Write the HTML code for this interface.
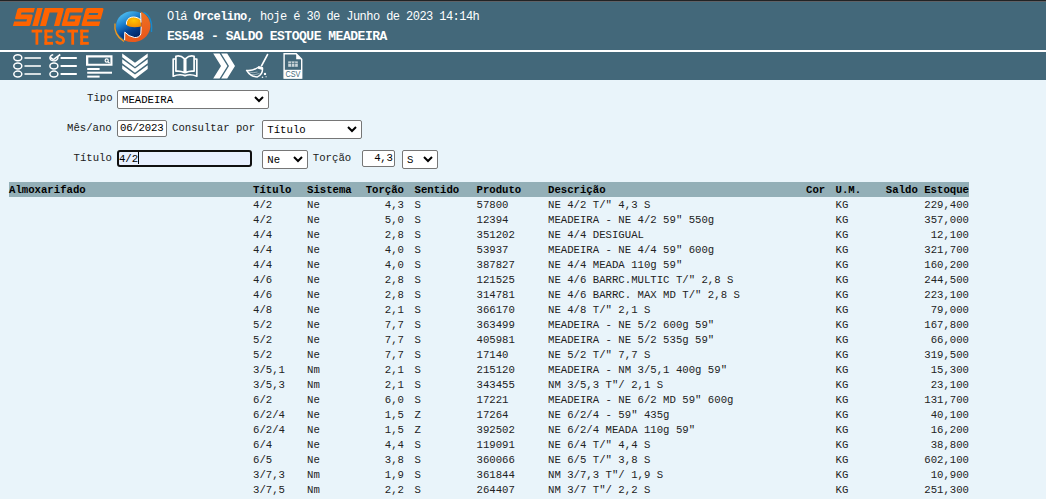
<!DOCTYPE html>
<html><head><meta charset="utf-8">
<style>
html,body{margin:0;padding:0;}
body{width:1046px;height:499px;overflow:hidden;background:#e9f4fa;position:relative;font-family:"Liberation Mono",monospace;}
#top{position:absolute;left:0;top:0;width:1046px;height:50px;background:#43687a;}
#top .l0{position:absolute;left:0;top:0;width:1046px;height:1px;background:#222325;}
#top .l1{position:absolute;left:0;top:1px;width:1046px;height:1px;background:#5f6166;}
#top .l2{position:absolute;left:0;top:2px;width:1046px;height:1px;background:#3f6a7c;}
#wline{position:absolute;left:0;top:50px;width:1046px;height:2px;background:#ffffff;}
#tb{position:absolute;left:0;top:52px;width:1046px;height:28px;background:#43687a;}
.ht{position:absolute;left:167px;color:#fff;white-space:pre;font-family:"Liberation Mono",monospace;}
.h1{top:10px;font-size:12px;letter-spacing:-0.56px;line-height:15px;}
.h2{top:29px;font-size:13px;letter-spacing:-0.47px;line-height:15px;font-weight:bold;}
svg{position:absolute;overflow:visible;}
.lbl{position:absolute;font-size:10.667px;line-height:15px;color:#202020;white-space:pre;}
.sel{position:absolute;box-sizing:border-box;background:#fff;border:1px solid #767676;border-radius:2px;}
.sel span{position:absolute;font-size:10.667px;line-height:15px;white-space:pre;color:#000;}
.inp{position:absolute;box-sizing:border-box;background:#fff;border:1px solid #767676;border-radius:2px;}
.inp span{position:absolute;font-size:10.667px;line-height:15px;white-space:pre;color:#000;}
.th{position:absolute;left:0;width:1046px;height:15px;}
.thbg{position:absolute;left:9px;width:960px;height:15px;background:#93afb7;}
.th .c{font-weight:bold;}
.tr{position:absolute;left:0;width:1046px;height:15px;}
.th .c,.tr .c{position:absolute;top:1px;font-size:10.667px;line-height:15px;white-space:pre;color:#000;}
.tr .c{color:#222;}
</style></head><body>
<div id="top"><div class="l0"></div><div class="l1"></div><div class="l2"></div></div>
<div id="wline"></div>
<div id="tb"></div>

<!-- SINGE logo -->
<svg style="left:0;top:0" width="160" height="50" viewBox="0 0 160 50">
  <g fill="#ff6300" transform="translate(0,26) skewX(-15.1) translate(0,-26)">
    <path d="M14.4,8 H30 V12.6 H17.9 V14.6 H28.5 Q30,14.6 30,16.1 V24.5 Q30,26 28.5,26 H12.9 V21.4 H25.2 V19.2 H14.4 Q12.9,19.2 12.9,17.7 V9.5 Q12.9,8 14.4,8 Z"/>
    <path d="M32.3,8 H37.9 V26 H32.3 Z"/>
    <path d="M40,8 H57.8 Q59.3,8 59.3,9.5 V26 H54 V12.6 H46 V26 H40 Z"/>
    <path d="M62.9,8 H78.6 V12.6 H66 V21.4 H73.5 V19.3 H67.8 V15.4 H78.6 V24.5 Q78.6,26 77.1,26 H62.9 Q61.4,26 61.4,24.5 V9.5 Q61.4,8 62.9,8 Z"/>
    <path d="M82.7,8 H97.5 Q99,8 99,9.5 V19.3 H85.6 V21.4 H99 V26 H82.7 Q81.2,26 81.2,24.5 V9.5 Q81.2,8 82.7,8 Z M85.6,12.9 V15 H94.7 V12.9 Z" fill-rule="evenodd"/>
  </g>
  <g fill="#ff6300">
    <rect x="31.6" y="29.7" width="10.6" height="2.8"/>
    <rect x="35.5" y="29.7" width="2.8" height="15"/>
    <rect x="44.5" y="29.7" width="2.8" height="15"/>
    <rect x="44.5" y="29.7" width="8.4" height="2.7"/>
    <rect x="44.5" y="35.7" width="7.9" height="2.6"/>
    <rect x="44.5" y="41.9" width="8.5" height="2.8"/>
    <rect x="67.4" y="29.7" width="10.6" height="2.8"/>
    <rect x="71.3" y="29.7" width="2.8" height="15"/>
    <rect x="80.3" y="29.7" width="2.8" height="15"/>
    <rect x="80.3" y="29.7" width="8.4" height="2.7"/>
    <rect x="80.3" y="35.7" width="7.9" height="2.6"/>
    <rect x="80.3" y="41.9" width="8.5" height="2.8"/>
  </g>
  <path d="M64,32.8 Q63.2,31.1 60.3,31.1 Q57,31.1 57,33.6 Q57,35.9 60.3,36.8 Q63.6,37.7 63.6,40.3 Q63.6,43.3 60.2,43.3 Q57.2,43.3 56.4,41" fill="none" stroke="#ff6300" stroke-width="2.7"/>
</svg>

<!-- globe logo -->
<svg style="left:108px;top:4px" width="50" height="44" viewBox="108 4 50 44">
  <defs>
    <linearGradient id="gb" x1="0.1" y1="0.1" x2="0.65" y2="0.95">
      <stop offset="0" stop-color="#52c2f2"/>
      <stop offset="0.35" stop-color="#1b7ccb"/>
      <stop offset="0.62" stop-color="#06408f"/>
      <stop offset="1" stop-color="#021e58"/>
    </linearGradient>
    <radialGradient id="gy" cx="0.5" cy="0.35" r="0.75">
      <stop offset="0" stop-color="#ffc400"/>
      <stop offset="1" stop-color="#f18500"/>
    </radialGradient>
    <linearGradient id="go" x1="0" y1="0" x2="0.3" y2="1">
      <stop offset="0" stop-color="#f07a22"/>
      <stop offset="1" stop-color="#e9581c"/>
    </linearGradient>
  </defs>
  <path d="M115,23.5 Q113.5,35 124,41.5" stroke="#f39a1e" stroke-width="1.3" fill="none"/>
  <path d="M143.5,12.2 Q153,17 151.5,32" stroke="#1789cc" stroke-width="1.3" fill="none"/>
  <ellipse cx="132.6" cy="26.2" rx="16.6" ry="15" fill="url(#gb)"/>
  <path d="M140.3,11.3 A16.6,15 0 0 1 124.6,40.4 L124.8,32.1 Q128.5,36.5 134.5,37.5 Q139.3,37.8 140.8,34 L141.2,26.5 Q141.5,22 141,12 Z" fill="url(#go)"/>
  <path d="M126.4,24.3 C125.8,16.5 135,14.8 140.8,19.8 L141.3,26.6 Q135,27.6 130,26.8 Q126.6,26 126.4,24.3 Z" fill="url(#gy)"/>
  <path d="M126.4,24.6 C125.8,16.5 135,14.8 140.8,19.8" stroke="#fff" stroke-width="1" fill="none"/>
  <path d="M140.6,12.9 L141,22.5" stroke="#fff" stroke-width="1" fill="none"/>
  <path d="M141.2,26.7 L140.8,34 Q139.3,37.8 134.5,37.5 Q128.5,36.5 124.8,32.1 L124.6,40.2" stroke="#fff" stroke-width="1" fill="none"/>
</svg>

<div class="ht h1">Olá <b>Orcelino</b>, hoje é 30 de Junho de 2023 14:14h</div>
<div class="ht h2">ES548 - SALDO ESTOQUE MEADEIRA</div>

<!-- toolbar icons -->
<svg style="left:0;top:52px" width="320" height="28" viewBox="0 52 320 28">
  <g fill="none" stroke="#fff" stroke-width="1.5">
    <ellipse cx="17.8" cy="57.8" rx="4" ry="3"/>
    <ellipse cx="17.8" cy="66" rx="4" ry="3"/>
    <ellipse cx="17.8" cy="74.1" rx="4" ry="3"/>
  </g>
  <g stroke="#d5dde0" stroke-width="2">
    <path d="M24.5,57.9 H40.9 M24.5,66 H40.9 M24.5,74.1 H40.9"/>
  </g>
  <g fill="none" stroke="#fff" stroke-width="1.5">
    <path d="M57.66,56.8 A4,3 0 1 1 53.2,54.85"/>
    <ellipse cx="53.9" cy="66" rx="4" ry="3"/>
    <ellipse cx="53.9" cy="74.1" rx="4" ry="3"/>
    <path d="M50.3,57.4 L53.4,59.6 L60.3,54.5" stroke-width="1.6"/>
  </g>
  <g stroke="#fff" stroke-width="2">
    <path d="M60.6,57.9 H76.8 M60.6,66 H76.8 M60.6,74.1 H76.8"/>
  </g>
  <!-- icon 3 -->
  <g fill="#fff">
    <path d="M86,55.2 H112.5 V65.8 H86 Z M88.3,57.4 V63.7 H110.4 V57.4 Z" fill-rule="evenodd"/>
    <rect x="87.2" y="68" width="12.4" height="2"/>
    <rect x="87.2" y="71.7" width="24.8" height="2"/>
    <rect x="87.2" y="75.6" width="12.4" height="2"/>
  </g>
  <g fill="none" stroke="#fff" stroke-width="1.2">
    <circle cx="106.7" cy="60.5" r="1.6"/>
    <path d="M107.9,61.7 L109.6,63.2"/>
  </g>
  <!-- icon 4 chevrons -->
  <g fill="#fff">
    <path d="M122.2,53.4 L135,62.7 L147.7,53.4 V57.3 L135,66.9 L122.2,57.3 Z"/>
    <path d="M122.2,59.3 L135,68.6 L147.7,59.3 V63.2 L135,72.8 L122.2,63.2 Z"/>
    <path d="M122.2,65.2 L135,74.5 L147.7,65.2 V69.1 L135,78.7 L122.2,69.1 Z"/>
  </g>
  <!-- book -->
  <g fill="none" stroke="#fff" stroke-width="1.7" stroke-linejoin="round">
    <path d="M175.9,56.3 Q180.5,55 184.3,58.6 V72.6 Q180.5,70.6 175.9,71.2 Z"/>
    <path d="M194.1,56.3 Q189.5,55 185.7,58.6 V72.6 Q189.5,70.6 194.1,71.2 Z"/>
    <path d="M175.9,59 H173.2 V76.2 Q179.5,73.6 185,75.6 Q190.5,73.6 196.8,76.2 V59 H194.1"/>
  </g>
  <!-- double chevron right -->
  <g fill="#fff">
    <path d="M213.2,53.4 H219.6 L227.4,65.9 L219.6,78.5 H213.2 L221,65.9 Z"/>
    <path d="M221.2,53.4 H227.2 L235,65.9 L227.2,78.5 H221.2 L229,65.9 Z"/>
  </g>
  <!-- broom -->
  <path d="M267.5,54.6 L261.5,65.8" stroke="#fff" stroke-width="1.7" stroke-linecap="round"/>
  <path d="M246.6,70.4 Q253,71.2 258.8,67 L262.5,68 Q263,74.6 257.4,76.9 Q250.6,77 246.6,70.4 Z" fill="none" stroke="#fff" stroke-width="1.5" stroke-linejoin="round"/>
  <path d="M258.2,66.2 L262.9,67.3 L262.6,70 L258,68.8 Z" fill="#fff"/>
  <path d="M248.6,71.8 Q253,73.6 257.5,72 M251,74.6 Q255,75.4 259.5,73.4" stroke="#dfe6ea" stroke-width="0.8" fill="none" opacity="0.7"/>
  <circle cx="265" cy="73.9" r="1.2" fill="#fff"/>
  <circle cx="262.5" cy="77.2" r="0.8" fill="#fff"/>
  <circle cx="266.1" cy="76.8" r="0.7" fill="#cfd8dc"/>
  <!-- CSV -->
  <g>
    <path d="M284.1,53.8 H296.2 L301.7,59.3 V78 H284.1 Z" fill="none" stroke="#fff" stroke-width="1.4"/>
    <path d="M296.2,53.8 V59.3 H301.7 Z" fill="#fff"/>
    <rect x="284.1" y="69.8" width="17.6" height="8.6" fill="#fff"/>
    <rect x="288.2" y="61.4" width="9.6" height="5.4" fill="#c9d4d8"/>
    <path d="M288.2,63.4 H297.8 M291.5,61.4 V66.8 M294.7,61.4 V66.8" stroke="#43687a" stroke-width="0.7"/>
    <text x="292.9" y="77.4" fill="#43687a" font-family="Liberation Sans" font-size="8.6" text-anchor="middle" textLength="15" lengthAdjust="spacingAndGlyphs">CSV</text>
  </g>
</svg>

<!-- form -->
<div class="lbl" style="left:87px;top:91px">Tipo</div>
<div class="sel" style="left:117px;top:90px;width:151.5px;height:18.5px"><span style="left:4px;top:1.5px">MEADEIRA</span></div>
<svg style="left:254px;top:96px" width="10" height="7" viewBox="0 0 10 7"><path d="M1,1 L5,5 L9,1" fill="none" stroke="#000" stroke-width="2"/></svg>

<div class="lbl" style="left:67px;top:121px">Mês/ano</div>
<div class="inp" style="left:117px;top:120px;width:50px;height:17px"><span style="left:2px;top:0;letter-spacing:-0.2px">06/2023</span></div>
<div class="lbl" style="left:172px;top:121px">Consultar por</div>
<div class="sel" style="left:262.3px;top:120.3px;width:99.3px;height:18.3px"><span style="left:4px;top:1.5px">Título</span></div>
<svg style="left:347.3px;top:126px" width="10" height="7" viewBox="0 0 10 7"><path d="M1,1 L5,5 L9,1" fill="none" stroke="#000" stroke-width="2"/></svg>

<div class="lbl" style="left:73.5px;top:151px">Título</div>
<div class="inp" style="left:117.4px;top:150px;width:134.4px;height:17px;border:2px solid #101010;border-radius:3px;background:#e8f0fe"><span style="left:-0.5px;top:-0.5px">4/2</span></div>
<div style="position:absolute;left:138px;top:152px;width:1px;height:12px;background:#000"></div>
<div class="sel" style="left:262.3px;top:150.2px;width:45.4px;height:18.5px"><span style="left:4px;top:1.5px">Ne</span></div>
<svg style="left:293px;top:156px" width="10" height="7" viewBox="0 0 10 7"><path d="M1,1 L5,5 L9,1" fill="none" stroke="#000" stroke-width="2"/></svg>
<div class="lbl" style="left:312.8px;top:151px">Torção</div>
<div class="inp" style="left:362px;top:150px;width:33px;height:17px"><span style="right:1.5px;top:0;letter-spacing:-0.3px">4,3</span></div>
<div class="sel" style="left:402.1px;top:150.2px;width:36px;height:18.5px"><span style="left:4px;top:1.5px">S</span></div>
<svg style="left:423px;top:156px" width="10" height="7" viewBox="0 0 10 7"><path d="M1,1 L5,5 L9,1" fill="none" stroke="#000" stroke-width="2"/></svg>

<div class="thbg" style="top:182px"></div><div class="th" style="top:182px">
<span class="c" style="left:9px">Almoxarifado</span>
<span class="c" style="left:253px">Título</span>
<span class="c" style="left:307px">Sistema</span>
<span class="c r" style="right:642px">Torção</span>
<span class="c" style="left:414.5px">Sentido</span>
<span class="c" style="left:476.5px">Produto</span>
<span class="c" style="left:548px">Descrição</span>
<span class="c" style="left:806px">Cor</span>
<span class="c" style="left:835.5px">U.M.</span>
<span class="c r" style="right:77px">Saldo Estoque</span>
</div>
<div class="tr" style="top:197px">
<span class="c" style="left:253px">4/2</span>
<span class="c" style="left:307px">Ne</span>
<span class="c r" style="right:642px">4,3</span>
<span class="c" style="left:414.5px">S</span>
<span class="c" style="left:476.5px">57800</span>
<span class="c" style="left:548px">NE 4/2 T/" 4,3 S</span>
<span class="c" style="left:835.5px">KG</span>
<span class="c r" style="right:77px">229,400</span>
</div>
<div class="tr" style="top:212px">
<span class="c" style="left:253px">4/2</span>
<span class="c" style="left:307px">Ne</span>
<span class="c r" style="right:642px">5,0</span>
<span class="c" style="left:414.5px">S</span>
<span class="c" style="left:476.5px">12394</span>
<span class="c" style="left:548px">MEADEIRA - NE 4/2 59" 550g</span>
<span class="c" style="left:835.5px">KG</span>
<span class="c r" style="right:77px">357,000</span>
</div>
<div class="tr" style="top:227px">
<span class="c" style="left:253px">4/4</span>
<span class="c" style="left:307px">Ne</span>
<span class="c r" style="right:642px">2,8</span>
<span class="c" style="left:414.5px">S</span>
<span class="c" style="left:476.5px">351202</span>
<span class="c" style="left:548px">NE 4/4 DESIGUAL</span>
<span class="c" style="left:835.5px">KG</span>
<span class="c r" style="right:77px">12,100</span>
</div>
<div class="tr" style="top:242px">
<span class="c" style="left:253px">4/4</span>
<span class="c" style="left:307px">Ne</span>
<span class="c r" style="right:642px">4,0</span>
<span class="c" style="left:414.5px">S</span>
<span class="c" style="left:476.5px">53937</span>
<span class="c" style="left:548px">MEADEIRA - NE 4/4 59" 600g</span>
<span class="c" style="left:835.5px">KG</span>
<span class="c r" style="right:77px">321,700</span>
</div>
<div class="tr" style="top:257px">
<span class="c" style="left:253px">4/4</span>
<span class="c" style="left:307px">Ne</span>
<span class="c r" style="right:642px">4,0</span>
<span class="c" style="left:414.5px">S</span>
<span class="c" style="left:476.5px">387827</span>
<span class="c" style="left:548px">NE 4/4 MEADA 110g 59"</span>
<span class="c" style="left:835.5px">KG</span>
<span class="c r" style="right:77px">160,200</span>
</div>
<div class="tr" style="top:272px">
<span class="c" style="left:253px">4/6</span>
<span class="c" style="left:307px">Ne</span>
<span class="c r" style="right:642px">2,8</span>
<span class="c" style="left:414.5px">S</span>
<span class="c" style="left:476.5px">121525</span>
<span class="c" style="left:548px">NE 4/6 BARRC.MULTIC T/" 2,8 S</span>
<span class="c" style="left:835.5px">KG</span>
<span class="c r" style="right:77px">244,500</span>
</div>
<div class="tr" style="top:287px">
<span class="c" style="left:253px">4/6</span>
<span class="c" style="left:307px">Ne</span>
<span class="c r" style="right:642px">2,8</span>
<span class="c" style="left:414.5px">S</span>
<span class="c" style="left:476.5px">314781</span>
<span class="c" style="left:548px">NE 4/6 BARRC. MAX MD T/" 2,8 S</span>
<span class="c" style="left:835.5px">KG</span>
<span class="c r" style="right:77px">223,100</span>
</div>
<div class="tr" style="top:302px">
<span class="c" style="left:253px">4/8</span>
<span class="c" style="left:307px">Ne</span>
<span class="c r" style="right:642px">2,1</span>
<span class="c" style="left:414.5px">S</span>
<span class="c" style="left:476.5px">366170</span>
<span class="c" style="left:548px">NE 4/8 T/" 2,1 S</span>
<span class="c" style="left:835.5px">KG</span>
<span class="c r" style="right:77px">79,000</span>
</div>
<div class="tr" style="top:317px">
<span class="c" style="left:253px">5/2</span>
<span class="c" style="left:307px">Ne</span>
<span class="c r" style="right:642px">7,7</span>
<span class="c" style="left:414.5px">S</span>
<span class="c" style="left:476.5px">363499</span>
<span class="c" style="left:548px">MEADEIRA - NE 5/2 600g 59"</span>
<span class="c" style="left:835.5px">KG</span>
<span class="c r" style="right:77px">167,800</span>
</div>
<div class="tr" style="top:332px">
<span class="c" style="left:253px">5/2</span>
<span class="c" style="left:307px">Ne</span>
<span class="c r" style="right:642px">7,7</span>
<span class="c" style="left:414.5px">S</span>
<span class="c" style="left:476.5px">405981</span>
<span class="c" style="left:548px">MEADEIRA - NE 5/2 535g 59"</span>
<span class="c" style="left:835.5px">KG</span>
<span class="c r" style="right:77px">66,000</span>
</div>
<div class="tr" style="top:347px">
<span class="c" style="left:253px">5/2</span>
<span class="c" style="left:307px">Ne</span>
<span class="c r" style="right:642px">7,7</span>
<span class="c" style="left:414.5px">S</span>
<span class="c" style="left:476.5px">17140</span>
<span class="c" style="left:548px">NE 5/2 T/" 7,7 S</span>
<span class="c" style="left:835.5px">KG</span>
<span class="c r" style="right:77px">319,500</span>
</div>
<div class="tr" style="top:362px">
<span class="c" style="left:253px">3/5,1</span>
<span class="c" style="left:307px">Nm</span>
<span class="c r" style="right:642px">2,1</span>
<span class="c" style="left:414.5px">S</span>
<span class="c" style="left:476.5px">215120</span>
<span class="c" style="left:548px">MEADEIRA - NM 3/5,1 400g 59"</span>
<span class="c" style="left:835.5px">KG</span>
<span class="c r" style="right:77px">15,300</span>
</div>
<div class="tr" style="top:377px">
<span class="c" style="left:253px">3/5,3</span>
<span class="c" style="left:307px">Nm</span>
<span class="c r" style="right:642px">2,1</span>
<span class="c" style="left:414.5px">S</span>
<span class="c" style="left:476.5px">343455</span>
<span class="c" style="left:548px">NM 3/5,3 T"/ 2,1 S</span>
<span class="c" style="left:835.5px">KG</span>
<span class="c r" style="right:77px">23,100</span>
</div>
<div class="tr" style="top:392px">
<span class="c" style="left:253px">6/2</span>
<span class="c" style="left:307px">Ne</span>
<span class="c r" style="right:642px">6,0</span>
<span class="c" style="left:414.5px">S</span>
<span class="c" style="left:476.5px">17221</span>
<span class="c" style="left:548px">MEADEIRA - NE 6/2 MD 59" 600g</span>
<span class="c" style="left:835.5px">KG</span>
<span class="c r" style="right:77px">131,700</span>
</div>
<div class="tr" style="top:407px">
<span class="c" style="left:253px">6/2/4</span>
<span class="c" style="left:307px">Ne</span>
<span class="c r" style="right:642px">1,5</span>
<span class="c" style="left:414.5px">Z</span>
<span class="c" style="left:476.5px">17264</span>
<span class="c" style="left:548px">NE 6/2/4 - 59" 435g</span>
<span class="c" style="left:835.5px">KG</span>
<span class="c r" style="right:77px">40,100</span>
</div>
<div class="tr" style="top:422px">
<span class="c" style="left:253px">6/2/4</span>
<span class="c" style="left:307px">Ne</span>
<span class="c r" style="right:642px">1,5</span>
<span class="c" style="left:414.5px">Z</span>
<span class="c" style="left:476.5px">392502</span>
<span class="c" style="left:548px">NE 6/2/4 MEADA 110g 59"</span>
<span class="c" style="left:835.5px">KG</span>
<span class="c r" style="right:77px">16,200</span>
</div>
<div class="tr" style="top:437px">
<span class="c" style="left:253px">6/4</span>
<span class="c" style="left:307px">Ne</span>
<span class="c r" style="right:642px">4,4</span>
<span class="c" style="left:414.5px">S</span>
<span class="c" style="left:476.5px">119091</span>
<span class="c" style="left:548px">NE 6/4 T/" 4,4 S</span>
<span class="c" style="left:835.5px">KG</span>
<span class="c r" style="right:77px">38,800</span>
</div>
<div class="tr" style="top:452px">
<span class="c" style="left:253px">6/5</span>
<span class="c" style="left:307px">Ne</span>
<span class="c r" style="right:642px">3,8</span>
<span class="c" style="left:414.5px">S</span>
<span class="c" style="left:476.5px">360066</span>
<span class="c" style="left:548px">NE 6/5 T/" 3,8 S</span>
<span class="c" style="left:835.5px">KG</span>
<span class="c r" style="right:77px">602,100</span>
</div>
<div class="tr" style="top:467px">
<span class="c" style="left:253px">3/7,3</span>
<span class="c" style="left:307px">Nm</span>
<span class="c r" style="right:642px">1,9</span>
<span class="c" style="left:414.5px">S</span>
<span class="c" style="left:476.5px">361844</span>
<span class="c" style="left:548px">NM 3/7,3 T"/ 1,9 S</span>
<span class="c" style="left:835.5px">KG</span>
<span class="c r" style="right:77px">10,900</span>
</div>
<div class="tr" style="top:482px">
<span class="c" style="left:253px">3/7,5</span>
<span class="c" style="left:307px">Nm</span>
<span class="c r" style="right:642px">2,2</span>
<span class="c" style="left:414.5px">S</span>
<span class="c" style="left:476.5px">264407</span>
<span class="c" style="left:548px">NM 3/7 T"/ 2,2 S</span>
<span class="c" style="left:835.5px">KG</span>
<span class="c r" style="right:77px">251,300</span>
</div>
</body></html>
